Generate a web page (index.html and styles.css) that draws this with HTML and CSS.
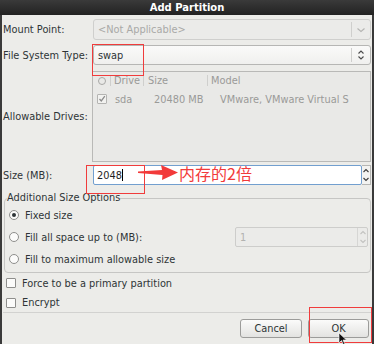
FILE: index.html
```html
<!DOCTYPE html>
<html>
<head>
<meta charset="utf-8">
<link rel="stylesheet" href="styles.css">
</head>
<body>
<div class="screen">
  <div class="title">Add Partition</div>
  <div class="win">
    <div class="row r-mount">
      <span class="lbl">Mount Point:</span>
      <div class="combo disabled">
        <span class="ctext">&lt;Not Applicable&gt;</span>
        <span class="csep"></span>
        <svg class="cicon" width="10" height="8" viewBox="0 0 10 8"><path d="M1.5 2.5 L5 5.5 L8.5 2.5" fill="none" stroke="#b4b4b2" stroke-width="1.1"/></svg>
      </div>
    </div>
    <div class="row r-fs">
      <span class="lbl">File System Type:</span>
      <div class="combo">
        <span class="ctext">swap</span>
        <span class="csep"></span>
        <svg class="cicon" width="10" height="14" viewBox="0 0 10 14"><path d="M2.5 5.5 L5 3 L7.5 5.5 M2.5 8.5 L5 11 L7.5 8.5" fill="none" stroke="#4a4a4a" stroke-width="1.1"/></svg>
      </div>
    </div>
    <div class="row r-drives">
      <span class="lbl">Allowable Drives:</span>
      <div class="table">
        <div class="thead">
          <span class="th th-chk"><span class="hcircle"></span></span>
          <span class="th th-drive">Drive</span>
          <span class="th th-size">Size</span>
          <span class="th th-model">Model</span>
        </div>
        <div class="trow">
          <span class="td td-chk"><span class="tbox"><svg width="8" height="8" viewBox="0 0 8 8"><path d="M1.5 4 L3.3 6 L6.8 1.2" fill="none" stroke="#8c8c8c" stroke-width="1.3"/></svg></span></span>
          <span class="td td-drive">sda</span>
          <span class="td td-size">20480 MB</span>
          <span class="td td-model">VMware, VMware Virtual S</span>
        </div>
      </div>
    </div>
    <div class="row r-size">
      <span class="lbl">Size (MB):</span>
      <div class="spin">
        <div class="entry">2048<span class="caret"></span></div>
        <div class="spinbtns">
          <svg width="8" height="18" viewBox="0 0 8 18"><path d="M1.5 6 L4 3.5 L6.5 6 M1.5 12 L4 14.5 L6.5 12" fill="none" stroke="#3a3a3a" stroke-width="1.1"/></svg>
        </div>
      </div>
    </div>
    <fieldset class="frame">
      <legend class="legend">Additional Size Options</legend>
      <div class="opt"><span class="radio on"></span><span>Fixed size</span></div>
      <div class="opt"><span class="radio"></span><span class="opt-text">Fill all space up to (MB):</span>
        <div class="spin2">
          <span class="s2text">1</span>
          <span class="s2btns"><svg width="8" height="18" viewBox="0 0 8 18"><path d="M1.5 6 L4 3.5 L6.5 6 M1.5 12 L4 14.5 L6.5 12" fill="none" stroke="#c2c2c0" stroke-width="1.1"/></svg></span>
        </div>
      </div>
      <div class="opt"><span class="radio"></span><span>Fill to maximum allowable size</span></div>
    </fieldset>
    <div class="check c-primary"><span class="box"></span><span>Force to be a primary partition</span></div>
    <div class="check c-encrypt"><span class="box"></span><span>Encrypt</span></div>
    <div class="actions">
      <button class="btn btn-cancel">Cancel</button>
      <button class="btn btn-ok">OK</button>
    </div>
  </div>

  <div class="mark mark-swap"></div>
  <div class="mark mark-size"></div>
  <div class="mark mark-ok"></div>
  <svg class="arrow" width="44" height="20" viewBox="0 0 44 20"><path d="M0 6.5 L24 5 L23 0 L40 7.5 L24 15 L24.5 10 L0 8 Z" fill="#f23a3a"/></svg>
  <div class="note">内存的2倍</div>
  <svg class="pointer" width="9" height="12" viewBox="0 0 9 12"><path d="M1 0 L1 10 L3.5 7.5 L5.5 12 L7 11.3 L5 7 L8.5 7 Z" fill="#111" stroke="#fff" stroke-width="0.6"/></svg>
</div>
</body>
</html>
```

FILE: styles.css
```css
html, body {
  margin: 0;
  padding: 0;
}
body {
  width: 374px;
  height: 344px;
  overflow: hidden;
  background: #ecece9;
  font-family: "DejaVu Sans", sans-serif;
  font-size: 9.8px;
  color: #2e3436;
}
.screen {
  position: relative;
  width: 374px;
  height: 344px;
}
.title {
  height: 15px;
  line-height: 15px;
  background: linear-gradient(#3a3a3a, #222);
  color: #fff;
  font-weight: bold;
  font-size: 10px;
  text-align: center;
}
.win {
  height: 329px;
  box-sizing: border-box;
  border-left: 2px solid #3a3a3a;
  border-right: 2px solid #3a3a3a;
  padding: 4px 1px 0 1px;
  background: #ecece9;
}
.row {
  display: grid;
  grid-template-columns: 90px 1fr;
  align-items: center;
}
.lbl {
  white-space: nowrap;
}
.r-mount { height: 21px; margin-bottom: 5px; }
.r-fs { height: 20px; margin-bottom: 6px; }
.r-drives { height: 91px; margin-bottom: 3px; }
.r-size { height: 20px; }

.combo {
  height: 100%;
  box-sizing: border-box;
  border: 1px solid #b6b6b4;
  border-radius: 3px;
  background: linear-gradient(#fafaf9, #f0f0ee);
  display: flex;
  align-items: center;
  padding-left: 4px;
}
.combo.disabled {
  background: #ebebe9;
  border-color: #cfcfcd;
  color: #a9a9a7;
}
.ctext { flex: 1; }
.csep {
  width: 1px;
  align-self: stretch;
  margin: 2px 0;
  background: #cfcfcd;
}
.cicon {
  margin: 0 4px 0 4px;
}
.r-drives .table { margin-left: -1px; }
.table {
  height: 91px;
  box-sizing: border-box;
  border: 1px solid #b9b9b7;
  background: #e9e9e7;
  color: #9a9a98;
  overflow: hidden;
}
.thead, .trow {
  display: flex;
  align-items: center;
}
.thead { height: 17px; }
.trow { height: 18px; margin-top: 1px; }
.th {
  height: 11px;
  line-height: 11px;
  box-sizing: border-box;
  border-right: 1px solid #cfcfcd;
  white-space: nowrap;
}
.th-chk { width: 18px; display: flex; align-items: center; justify-content: center; }
.hcircle {
  width: 6px; height: 6px;
  border: 1px solid #a8a8a6;
  border-radius: 50%;
}
.th-drive { width: 33px; padding-left: 3px; }
.th-size { width: 64px; padding-left: 4px; }
.th-model { flex: 1; padding-left: 3px; border-right: none; }
.td { white-space: nowrap; }
.td-chk { width: 18px; display: flex; justify-content: center; }
.tbox {
  width: 8px; height: 8px;
  border: 1px solid #b4b4b2;
  border-radius: 1px;
  background: #f2f2f0;
  display: flex;
}
.td-drive { width: 40px; padding-left: 4px; box-sizing: border-box; }
.td-size { width: 66px; padding-left: 3px; }
.td-model { flex: 1; }

.spin {
  display: flex;
  height: 100%;
}
.entry {
  flex: 1;
  box-sizing: border-box;
  border: 1px solid #729fcf;
  border-radius: 2px;
  background: #fff;
  padding-left: 3px;
  display: flex;
  align-items: center;
  color: #1e1e1e;
}
.caret {
  width: 1px;
  height: 12px;
  background: #000;
}
.spinbtns {
  width: 9px;
  box-sizing: border-box;
  border: 1px solid #b6b6b4;
  border-left: none;
  background: #f3f3f1;
  display: flex;
  align-items: center;
  justify-content: center;
}

.frame {
  margin: 7px 0 0 1px;
  padding: 0 0 2px 0;
  border: 1px solid #c6c6c4;
  border-radius: 4px;
  min-width: 0;
}
.legend {
  margin-left: 2px;
  padding: 0;
  line-height: 12px;
}
.opt {
  height: 22px;
  display: flex;
  align-items: center;
  padding-left: 4px;
}
.radio {
  width: 8px; height: 8px;
  border: 1px solid #8e8e8c;
  border-radius: 50%;
  background: #fbfbfa;
  margin-right: 6px;
  position: relative;
  flex: none;
}
.radio.on::after {
  content: "";
  position: absolute;
  left: 2px; top: 2px;
  width: 4px; height: 4px;
  border-radius: 50%;
  background: #2e3436;
}
.opt-text { flex: 1; }
.spin2 {
  width: 133px;
  height: 20px;
  box-sizing: border-box;
  border: 1px solid #cdcdcb;
  border-radius: 2px;
  background: #ebebe9;
  display: flex;
  align-items: center;
  margin-right: 2px;
  color: #b2b2b0;
}
.s2text { flex: 1; padding-left: 4px; }
.s2btns {
  width: 9px;
  height: 100%;
  border-left: 1px solid #d6d6d4;
  display: flex;
  align-items: center;
  justify-content: center;
}

.check {
  display: flex;
  align-items: center;
  padding-left: 3px;
}
.c-primary { height: 20px; }
.c-encrypt { height: 19px; border-bottom: 1px solid #d2d2d0; }
.box {
  width: 8px; height: 8px;
  border: 1px solid #8e8e8c;
  border-radius: 1px;
  background: #fbfbfa;
  margin-right: 6px;
}
.actions {
  display: flex;
  justify-content: flex-end;
  gap: 6px;
  padding: 6px 2px 0 0;
}
.btn {
  height: 19px;
  box-sizing: border-box;
  border: 1px solid #9c9c9a;
  border-radius: 3px;
  background: linear-gradient(#fbfbfa, #e3e3e1);
  font-family: "DejaVu Sans", sans-serif;
  font-size: 9.8px;
  color: #2e3436;
  padding: 0;
}
.btn-cancel { width: 62px; }
.btn-ok { width: 61px; }

.mark {
  position: absolute;
  border: 1px solid #f03c3c;
}
.mark-swap { left: 92px; top: 44px; width: 50px; height: 30px; }
.mark-size { left: 86px; top: 165px; width: 57px; height: 27px; }
.mark-ok { left: 309px; top: 307px; width: 61px; height: 34px; }
.arrow {
  position: absolute;
  left: 138px;
  top: 165px;
}
.note {
  position: absolute;
  left: 179px;
  top: 164px;
  font-family: "Noto Sans CJK SC", sans-serif;
  font-size: 16px;
  line-height: 19px;
  color: #f23a3a;
}
.pointer {
  position: absolute;
  left: 338px;
  top: 333px;
}
```
